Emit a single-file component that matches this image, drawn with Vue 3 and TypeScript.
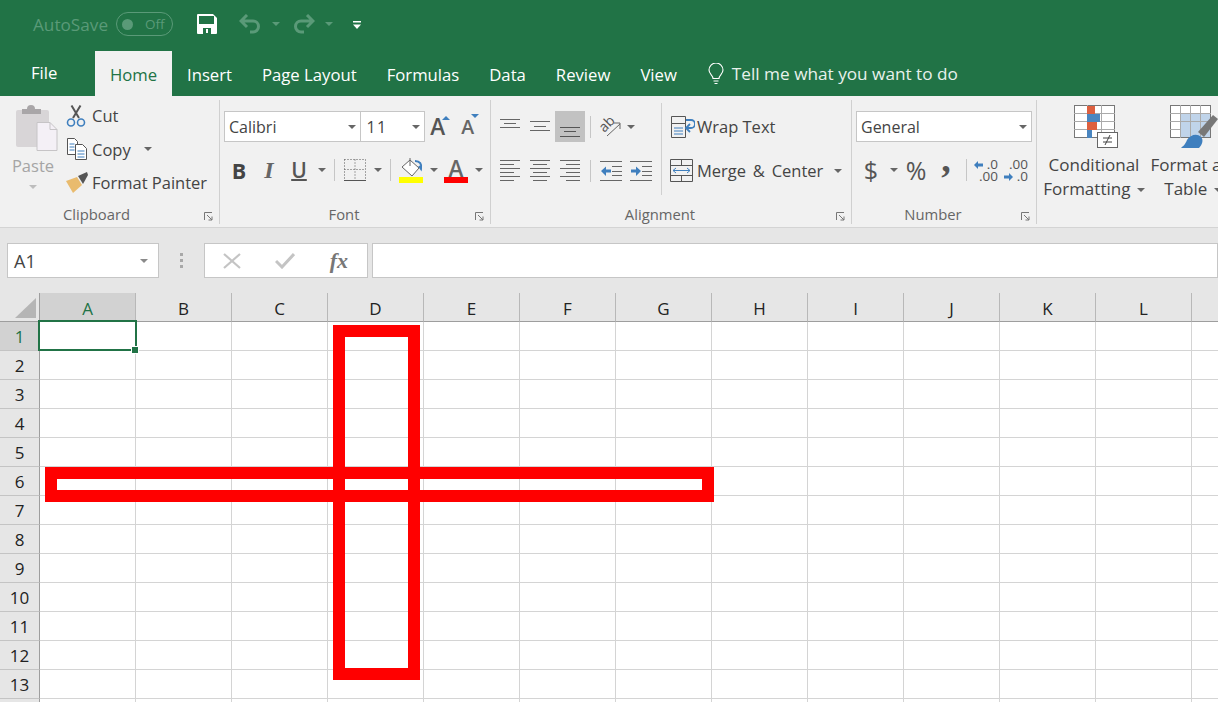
<template>
  <div class="excel">
    <!-- title bar -->
    <div class="titlebar">
      <span class="autosave">AutoSave</span>
      <span class="toggle"><i class="knob"></i><span class="off">Off</span></span>
      <svg class="save" width="20" height="20" viewBox="0 0 20 20">
        <path d="M0 1a1 1 0 0 1 1-1h15l4 4v15a1 1 0 0 1-1 1H1a1 1 0 0 1-1-1z" fill="#fff" />
        <rect x="2" y="2" width="15" height="8" fill="#217346" />
        <rect x="6" y="14" width="8" height="6" fill="#217346" />
        <rect x="9" y="15" width="2" height="4" fill="#fff" />
      </svg>
      <svg class="undo" width="23" height="20" viewBox="0 0 23 20" fill="none" stroke="#5a9a78" stroke-width="3">
        <path d="M8 1 2 7l6 6M2 7h12a5.500 5.500 0 0 1 0 11h-3" />
      </svg>
      <i class="caret dim undo-caret"></i>
      <svg class="redo" width="23" height="20" viewBox="0 0 23 20" fill="none" stroke="#5a9a78" stroke-width="3">
        <path d="m15 1 6 6-6 6m6-6H9a5.500 5.500 0 0 0 0 11h3" />
      </svg>
      <i class="caret dim undo-caret"></i>
      <svg class="customize" width="8" height="8" viewBox="0 0 8 8" fill="#fff">
        <rect width="8" height="1.500" />
        <path d="M0 3.500h8L4 8z" />
      </svg>
    </div>

    <!-- tabs -->
    <div class="tabs">
      <span v-for="t in tabs" :key="t" class="tab" :class="{ active: t === 'Home', file: t === 'File' }">{{ t }}</span>
      <svg class="bulb" width="16" height="22" viewBox="0 0 16 22" fill="none" stroke="#fff" stroke-width="1.100">
        <path d="M5 15.500c0-3-4-4.500-4-8.500a7 7 0 0 1 14 0c0 4-4 5.500-4 8.500zM5.500 18h5M6.500 20.500h3" />
      </svg>
      <span class="tell">Tell me what you want to do</span>
    </div>

    <!-- ribbon -->
    <div class="ribbon">
      <section class="group g-clip">
        <div class="g-body clip-body">
          <div class="paste">
            <svg width="42" height="46" viewBox="0 0 42 46">
              <rect y="5" width="33" height="37" rx="2" fill="#d8d5d7" />
              <path d="M6 9V4h5a4 4 0 0 1 8 0h6v5z" fill="#a9a6a8" />
              <path d="M21 17.500h13l7 7v21H21z" fill="#f4f0f6" stroke="#c6c4c6" />
              <path d="M34 17.500v7h7" fill="none" stroke="#c6c4c6" />
            </svg>
            <span class="paste-label">Paste</span>
            <i class="caret pale"></i>
          </div>
          <div class="clip-rows">
            <div class="clip-row">
              <svg class="ic-cut" width="20" height="22" viewBox="0 0 20 22" fill="none">
                <path d="M7 13 14.500 0.500M13 13 5.500 0.500" stroke="#555" stroke-width="2" />
                <circle cx="5" cy="17.500" r="3.500" stroke="#3f7fbe" stroke-width="1.600" />
                <circle cx="15" cy="17.500" r="3.500" stroke="#3f7fbe" stroke-width="1.600" />
              </svg>
              <span>Cut</span>
            </div>
            <div class="clip-row">
              <svg class="ic-copy" width="20" height="22" viewBox="0 0 20 22" fill="#fff">
                <path d="M.5.500h7l3 3v13H.500z" stroke="#555" />
                <path d="M2.500 6h5M2.500 9h5M2.500 12h5" stroke="#3f7fbe" />
                <path d="M8.500 6.500h7l4 4v11h-11z" stroke="#555" />
                <path d="M10.500 13h7M10.500 16h7M10.500 19h7" stroke="#3f7fbe" />
              </svg>
              <span>Copy</span>
              <i class="caret copy-caret"></i>
            </div>
            <div class="clip-row">
              <svg class="ic-painter" width="23" height="21" viewBox="0 0 23 21">
                <path d="M1 9 12 5l5 8-9 8z" fill="#e9bb6e" />
                <path d="M13 4 22 0l1 3-5 9z" fill="#555" />
              </svg>
              <span>Format Painter</span>
            </div>
          </div>
        </div>
        <div class="g-label"><span></span><span>Clipboard</span><svg class="launch" width="9" height="9" viewBox="0 0 9 9" fill="none" stroke="#777"><path d="M.5 8V.5H8M3 3l5 5M8 4.500V8H4.500" /></svg></div>
      </section>

      <section class="group g-font">
        <div class="g-body font-body">
          <div class="row combos">
            <div class="combo font-name"><span>Calibri</span><i class="caret"></i></div>
            <div class="combo font-size"><span class="size-val">11</span><i class="caret"></i></div>
            <span class="grow"><span class="big-a">A</span><i class="tri up"></i></span>
            <span class="grow shrink"><span class="small-a">A</span><i class="tri down"></i></span>
          </div>
          <div class="row tool-row">
            <span class="tb bold">B</span>
            <span class="tb ital">I</span>
            <span class="tb under">U</span>
            <span class="ar"><i class="caret"></i></span>
            <i class="vsep"></i>
            <span class="tb">
              <svg width="22" height="22" viewBox="0 0 22 22" fill="none" stroke="#555">
                <path d="M.5.500h21M.5 10.500h21M.5.500v20M11 .5v20M21.500.500v20" stroke-dasharray="1 2" />
                <path d="M0 21.500h22" />
              </svg>
            </span>
            <span class="ar"><i class="caret"></i></span>
            <i class="vsep"></i>
            <span class="tb stack">
              <svg width="24" height="19" viewBox="0 0 24 19" fill="none">
                <path d="M3 9l8-7 9 8-7 8z" fill="#fff" stroke="#666" />
                <path d="M11 0v8" stroke="#666" />
                <path d="M16 3c5 0 7 3 6 8l-2-3" stroke="#3f7fbe" stroke-width="2" />
              </svg>
              <i class="bar yellow"></i>
            </span>
            <span class="ar"><i class="caret"></i></span>
            <span class="tb stack">
              <span class="color-a">A</span>
              <i class="bar red"></i>
            </span>
            <span class="ar"><i class="caret"></i></span>
          </div>
        </div>
        <div class="g-label"><span></span><span>Font</span><svg class="launch" width="9" height="9" viewBox="0 0 9 9" fill="none" stroke="#777"><path d="M.5 8V.5H8M3 3l5 5M8 4.500V8H4.500" /></svg></div>
      </section>

      <section class="group g-align">
        <div class="g-body align-body">
          <div class="align-left">
            <div class="row align-row">
              <span class="tb"><svg width="20" height="22" viewBox="0 0 20 22" stroke="#666"><path d="M0 3.500h20M4 7.500h12M0 11.500h20" /></svg></span>
              <span class="tb"><svg width="20" height="22" viewBox="0 0 20 22" stroke="#666"><path d="M0 5.500h20M4 10.500h12M0 14.500h20" /></svg></span>
              <span class="tb on"><svg width="20" height="22" viewBox="0 0 20 22" stroke="#555"><path d="M0 11.500h20M4 15.500h12M0 20.500h20" /></svg></span>
              <i class="vsep"></i>
              <span class="tb">
                <svg class="orient" width="22" height="20" viewBox="0 0 22 20" fill="none">
                  <text x="0" y="12" transform="rotate(-45 7 9)" class="ab">ab</text>
                  <path d="M7 19 20 7M14 6h6v6" stroke="#666" />
                </svg>
              </span>
              <span class="ar orient-caret"><i class="caret"></i></span>
            </div>
            <div class="row align-row second">
              <span class="tb" v-for="(d, i) in alignPaths" :key="i">
                <svg width="20" height="22" viewBox="0 0 20 22" stroke="#666"><path :d="d" /></svg>
              </span>
              <i class="vsep"></i>
              <span class="tb">
                <svg width="22" height="22" viewBox="0 0 22 22" fill="none">
                  <path d="M0 1.500h22M12 6.500h10M12 11.500h10M12 15.500h10M0 20.500h22" stroke="#666" />
                  <path d="M1 11 6 6.500v3h5v3H6V16z" fill="#3f7fbe" />
                </svg>
              </span>
              <span class="tb">
                <svg width="22" height="22" viewBox="0 0 22 22" fill="none">
                  <path d="M0 1.500h22M12 6.500h10M12 11.500h10M12 15.500h10M0 20.500h22" stroke="#666" />
                  <path d="M11 11 6 6.500v3H1v3h5V16z" fill="#3f7fbe" />
                </svg>
              </span>
            </div>
          </div>
          <i class="tall-sep"></i>
          <div class="align-right">
            <div class="wide-btn wrap">
              <svg width="24" height="22" viewBox="0 0 24 22" fill="none">
                <path d="M.5.500h14v7H.5zM.5 7.500h14v14H.5z" stroke="#555" />
                <path d="M3 12h9M3 15h9M3 18h9" stroke="#3f7fbe" />
                <path d="M15 4h5a3.500 3.500 0 0 1 0 8h-4M19 8l-4 4 4 4" stroke="#3f7fbe" stroke-width="1.800" />
              </svg>
              <span>Wrap Text</span>
            </div>
            <div class="wide-btn merge">
              <svg width="23" height="23" viewBox="0 0 23 23" fill="none">
                <path d="M.5.500h22v22H.5zM.5 6.500h22M.5 16.500h22M11.500.500v6M11.500 16.500v6" stroke="#555" />
                <path d="M3 11.500h17M6 9l-3 2.500L6 14M17 9l3 2.500L17 14" stroke="#3f7fbe" />
              </svg>
              <span class="merge-text">Merge &amp; Center</span>
              <i class="caret merge-caret"></i>
            </div>
          </div>
        </div>
        <div class="g-label"><span></span><span>Alignment</span><svg class="launch" width="9" height="9" viewBox="0 0 9 9" fill="none" stroke="#777"><path d="M.5 8V.5H8M3 3l5 5M8 4.500V8H4.500" /></svg></div>
      </section>

      <section class="group g-number">
        <div class="g-body font-body">
          <div class="row combos">
            <div class="combo number-format"><span>General</span><i class="caret"></i></div>
          </div>
          <div class="row tool-row">
            <span class="tb sym dollar">$</span>
            <span class="ar"><i class="caret"></i></span>
            <span class="tb sym">%</span>
            <span class="tb sym comma">,</span>
            <i class="vsep"></i>
            <span class="tb dec">
              <span><svg width="9" height="8" viewBox="0 0 9 8"><path d="M0 4l4-4v2.500h5v3H4V8z" fill="#3f7fbe" /></svg> .0</span>
              <span>.00</span>
            </span>
            <span class="tb dec">
              <span>.00</span>
              <span><svg width="9" height="8" viewBox="0 0 9 8"><path d="M9 4 5 0v2.500H0v3h5V8z" fill="#3f7fbe" /></svg> .0</span>
            </span>
          </div>
        </div>
        <div class="g-label"><span></span><span>Number</span><svg class="launch" width="9" height="9" viewBox="0 0 9 9" fill="none" stroke="#777"><path d="M.5 8V.5H8M3 3l5 5M8 4.500V8H4.500" /></svg></div>
      </section>

      <section class="g-styles">
        <div class="big-btn cond">
          <svg class="cond-icon" width="45" height="44" viewBox="0 0 45 44" fill="none">
            <rect x=".5" y=".5" width="40" height="32" fill="#fff" stroke="#777" />
            <path d="M13.500 0v33M27.500 0v33M0 8.500h41M0 16.500h41M0 24.500h41" stroke="#aaa" />
            <rect x="13" y="1" width="8" height="8" fill="#dd6040" />
            <rect x="13" y="9" width="13" height="8" fill="#4a86c0" />
            <rect x="13" y="17" width="10" height="8" fill="#dd6040" />
            <rect x="13" y="25" width="5" height="8" fill="#4a86c0" />
            <rect x="23.500" y="27.500" width="20" height="15" fill="#fff" stroke="#666" />
            <path d="M29 33h9M29 37h9M31 40l5-10" stroke="#444" />
          </svg>
          <span class="big-text">Conditional</span>
          <span class="big-text">Formatting <i class="caret inline"></i></span>
        </div>
        <div class="big-btn table">
          <svg class="table-icon" width="48" height="44" viewBox="0 0 48 44" fill="none">
            <rect x=".5" y=".5" width="40" height="32" fill="#fff" stroke="#777" />
            <rect x="10" y="9" width="30" height="23" fill="#c0d4ea" />
            <path d="M10.500 0v33M20.500 0v33M30.500 0v33M0 8.500h41M0 16.500h41M0 24.500h11" stroke="#aaa" />
            <path d="M28 27 43 10l5 4-14 18z" fill="#777" />
            <path d="M11 43c2-2 4-3 6-8 3-5 10-7 14-3 3 3 1 8-2 11z" fill="#3f7fbe" />
          </svg>
          <span class="big-text">Format as</span>
          <span class="big-text table-line">Table <i class="caret inline"></i></span>
        </div>
      </section>
    </div>

    <!-- formula bar -->
    <div class="formula">
      <div class="namebox"><span>A1</span><i class="caret pale-dark"></i></div>
      <div class="dots"><i></i><i></i><i></i></div>
      <div class="fx-box">
        <svg width="18" height="16" viewBox="0 0 18 16" fill="none" stroke="#c4c4c4" stroke-width="2.200"><path d="M1 1l16 14M17 1 1 15" /></svg>
        <svg width="20" height="16" viewBox="0 0 20 16" fill="none" stroke="#c4c4c4" stroke-width="3"><path d="M1 8l6 6L19 1" /></svg>
        <span class="fx">fx</span>
      </div>
      <div class="fx-input"></div>
    </div>

    <!-- sheet -->
    <div class="sheet">
      <div class="grid">
        <div class="corner"><i></i></div>
        <div v-for="c in columns" :key="c" class="col-head" :class="{ sel: c === 'A' }">{{ c }}</div>
        <div class="col-head end"></div>
        <template v-for="r in rows" :key="r">
          <div class="row-head" :class="{ sel: r === 1 }">{{ r }}</div>
          <div v-for="c in columns" :key="c" class="cell">
            <div v-if="r === 1 && c === 'A'" class="selection"><i class="handle"></i></div>
          </div>
          <div class="cell end"></div>
        </template>
        <div class="row-head"></div>
        <div v-for="c in columns" :key="c" class="cell"></div>
        <div class="cell end"></div>
      </div>
      <div class="shape vertical"></div>
      <div class="shape horizontal"></div>
    </div>
  </div>
</template>

<script setup lang="ts">
const tabs: string[] = ['File', 'Home', 'Insert', 'Page Layout', 'Formulas', 'Data', 'Review', 'View'];
const columns: string[] = 'ABCDEFGHIJKL'.split('');
const rows: number[] = Array.from({ length: 13 }, (_, i) => i + 1);

const ys = [0.5, 4.5, 8.5, 12.5, 16.5, 20.5];
const linesFor = (x: number) =>
  ys.map((y, i) => (i % 2 === 0 ? `M0 ${y}h20` : `M${x} ${y}h14`)).join('');

const alignPaths: string[] = [linesFor(0), linesFor(3), linesFor(6)];
</script>

<style scoped>
.excel {
  width: 1218px;
  height: 702px;
  overflow: hidden;
  font-family: "Open Sans", "Noto Sans", sans-serif;
  color: #444;
  background: #fff;
}
i {
  display: block;
  font-style: normal;
}

.titlebar {
  height: 51px;
  padding: 0 0 3px 33px;
  box-sizing: border-box;
  display: flex;
  align-items: center;
  background: #217346;
}
.autosave {
  width: 83px;
  font-size: 17.2px;
  color: #5a9a78;
  white-space: nowrap;
}
.toggle {
  width: 57px;
  height: 24px;
  box-sizing: border-box;
  border: 1px solid #5a9a78;
  border-radius: 12px;
  display: flex;
  align-items: center;
  color: #5a9a78;
  font-size: 13.5px;
}
.knob {
  width: 11px;
  height: 11px;
  margin-left: 5px;
  border-radius: 50%;
  background: #5a9a78;
}
.off {
  margin-left: 12px;
}
.save {
  margin-left: 24px;
}
.undo {
  margin-left: 22px;
}
.undo-caret {
  margin: 0 12px 0 10px;
}
.customize {
  margin: 1px 0 0 8px;
}

.caret {
  width: 0;
  height: 0;
  border-left: 4px solid transparent;
  border-right: 4px solid transparent;
  border-top: 4px solid #666;
}
.caret.dim {
  border-top-color: #5a9a78;
}
.caret.pale {
  border-top-color: #bdbdbd;
}
.caret.pale-dark {
  border-top-color: #8a8a8a;
}
.caret.inline {
  display: inline-block;
  vertical-align: middle;
  margin-left: 2px;
}

.tabs {
  height: 45px;
  display: flex;
  align-items: center;
  background: #217346;
  color: #fff;
  font-size: 16.7px;
}
.tab {
  height: 45px;
  padding: 0 15px;
  line-height: 47px;
  white-space: nowrap;
}
.tab.file {
  width: 95px;
  padding: 0 0 0 31px;
  box-sizing: border-box;
  line-height: 44px;
}
.tab.active {
  width: 77px;
  padding: 0;
  text-align: center;
  background: #f1f1f1;
  color: #217346;
}
.bulb {
  margin: 0 8px 0 16px;
}
.tell {
  font-size: 17.2px;
  color: #e8f1ec;
  white-space: nowrap;
}

.ribbon {
  height: 132px;
  box-sizing: border-box;
  padding: 4px 0 3px;
  display: flex;
  background: #f1f1f1;
  border-bottom: 1px solid #d4d4d4;
  font-size: 16.5px;
}
.group {
  height: 124px;
  flex: none;
  box-sizing: border-box;
  display: flex;
  flex-direction: column;
  border-right: 1px solid #d0d0d0;
}
.g-clip {
  width: 220px;
}
.g-font {
  width: 271px;
  padding-left: 4px;
}
.g-align {
  width: 361px;
  padding-left: 4px;
}
.g-number {
  width: 185px;
  padding-left: 4px;
}
.g-body {
  flex: 1;
  min-height: 0;
}
.g-label {
  height: 24px;
  padding: 4px 6px 0 0;
  box-sizing: border-box;
  flex: none;
  display: grid;
  grid-template-columns: 1fr auto 1fr 20px;
  align-items: center;
  font-size: 14.8px;
  color: #666;
}
.launch {
  grid-column: 4;
  justify-self: end;
  margin-top: 4px;
}

.clip-body {
  display: flex;
}
.paste {
  width: 66px;
  display: flex;
  flex-direction: column;
  align-items: center;
}
.paste svg {
  margin: 5px 0 0 7px;
}
.paste-label {
  margin-top: 3px;
  color: #a5a5a5;
}
.paste .caret {
  margin-top: 8px;
}
.clip-rows {
  display: flex;
  flex-direction: column;
  margin-top: -1px;
}
.clip-row {
  height: 33.5px;
  display: flex;
  align-items: center;
  white-space: nowrap;
}
.clip-row svg {
  flex: none;
}
.ic-cut {
  margin-right: 6px;
}
.ic-copy {
  margin: 0 5px 0 1px;
}
.ic-painter {
  margin: 0 4px 0 -1px;
}
.copy-caret {
  margin-left: 13px;
}

.row {
  display: flex;
  align-items: center;
}
.combos {
  margin-top: 11px;
  height: 31px;
}
.combo {
  height: 31px;
  box-sizing: border-box;
  padding: 0 4px;
  display: flex;
  align-items: center;
  justify-content: space-between;
  background: #fff;
  border: 1px solid #c6c6c6;
  font-size: 16px;
}
.font-name {
  width: 138px;
}
.font-size {
  width: 65px;
  margin-left: -1px;
}
.size-val {
  letter-spacing: 1.5px;
  padding-left: 1px;
}
.number-format {
  width: 176px;
}
.grow {
  width: 30px;
  display: flex;
  align-items: flex-start;
  margin-left: 5px;
}
.grow.shrink {
  margin-left: 0;
}
.big-a {
  font-size: 22.500px;
  line-height: 34px;
  font-weight: 600;
  color: #555;
}
.small-a {
  font-size: 19.500px;
  line-height: 35px;
  font-weight: 600;
  color: #666;
  margin-left: 1px;
}
.tri {
  width: 0;
  height: 0;
  margin: 6px 0 0 -3px;
  border-left: 4px solid transparent;
  border-right: 4px solid transparent;
}
.tri.up {
  border-bottom: 4px solid #3f7fbe;
}
.tri.down {
  margin-top: 5px;
  border-top: 4px solid #3f7fbe;
}

.tool-row {
  margin-top: 12px;
  height: 32px;
}
.tb {
  width: 30px;
  height: 31px;
  flex: none;
  display: flex;
  align-items: center;
  justify-content: center;
}
.tb.on {
  background: #c2c2c2;
}
.ar {
  width: 15px;
  flex: none;
  display: flex;
  justify-content: center;
}
.vsep {
  width: 1px;
  height: 22px;
  margin: 0 5px;
  flex: none;
  background: #c6c6c6;
}
.bold {
  font-weight: 700;
  font-size: 21.500px;
  color: #444;
}
.ital {
  font-family: "Liberation Serif", serif;
  font-style: italic;
  font-weight: 700;
  font-size: 24px;
  color: #666;
}
.under {
  font-size: 21px;
  font-weight: 600;
  text-decoration: underline;
  text-decoration-thickness: 2px;
  text-underline-offset: 1px;
  color: #555;
}
.stack {
  flex-direction: column;
  justify-content: flex-start;
  padding-top: 3px;
  box-sizing: border-box;
}
.bar {
  width: 24px;
  height: 6px;
  flex: none;
}
.bar.yellow {
  background: #ffff00;
}
.bar.red {
  background: #ff0000;
}
.color-a {
  height: 19px;
  line-height: 21px;
  font-size: 22.500px;
  font-weight: 600;
  color: #666;
}

.align-body {
  display: flex;
}
.align-left {
  width: 166px;
}
.align-row {
  margin-top: 11px;
  height: 31px;
}
.align-row.second {
  margin-top: 13px;
}
.ab {
  font-size: 14px;
  fill: #555;
}
.orient {
  overflow: visible;
}
.orient-caret {
  margin-left: -3px;
}
.tall-sep {
  width: 1px;
  height: 92px;
  margin-top: 3px;
  background: #d0d0d0;
}
.align-right {
  padding-left: 9px;
}
.wide-btn {
  display: flex;
  align-items: center;
  white-space: nowrap;
}
.wrap {
  height: 31px;
  margin-top: 11px;
}
.merge {
  height: 31px;
  margin-top: 13px;
}
.wide-btn svg {
  flex: none;
}
.wrap svg {
  margin-right: 2px;
}
.merge svg {
  margin-right: 4px;
  margin-left: -1px;
}
.merge-text {
  word-spacing: 2.5px;
}
.merge-caret {
  margin-left: 11px;
}

.sym {
  font-size: 25px;
  color: #555;
}
.comma {
  font-family: "Liberation Serif", serif;
  font-weight: 700;
  font-size: 38px;
  line-height: 1;
  padding-bottom: 22px;
  box-sizing: border-box;
}
.dec {
  flex-direction: column;
  align-items: flex-end;
  padding-right: 4px;
  box-sizing: border-box;
  font-size: 13.500px;
  line-height: 12px;
  color: #555;
  white-space: nowrap;
}

.g-styles {
  display: flex;
  padding-left: 4px;
  flex: none;
}
.big-btn {
  flex: none;
  display: flex;
  flex-direction: column;
  align-items: center;
}
.big-btn svg {
  margin-top: 5px;
  margin-bottom: 4px;
}
.big-btn svg.cond-icon {
  margin-left: 5px;
}
.big-btn svg.table-icon {
  margin-left: 8px;
}
.cond {
  width: 106px;
}
.table {
  width: 86px;
}
.big-text {
  height: 24px;
  line-height: 24px;
  white-space: nowrap;
  font-size: 17px;
}
.table-line {
  padding-left: 6px;
}

.formula {
  height: 65px;
  box-sizing: border-box;
  padding: 15px 0 0 7px;
  display: flex;
  align-items: flex-start;
  background: #e6e6e6;
}
.namebox {
  width: 152px;
  height: 35px;
  box-sizing: border-box;
  padding: 0 10px 0 6px;
  display: flex;
  align-items: center;
  justify-content: space-between;
  background: #fff;
  border: 1px solid #c6c6c6;
  font-size: 18px;
}
.dots {
  width: 45px;
  height: 35px;
  display: flex;
  flex-direction: column;
  align-items: center;
  justify-content: center;
  gap: 3px;
}
.dots i {
  width: 3px;
  height: 3px;
  background: #a8a8a8;
}
.fx-box {
  width: 164px;
  height: 35px;
  box-sizing: border-box;
  padding: 0 19px 0 18px;
  display: flex;
  align-items: center;
  justify-content: space-between;
  background: #fff;
  border: 1px solid #c6c6c6;
}
.fx {
  font-family: "Liberation Serif", serif;
  font-style: italic;
  font-weight: 700;
  font-size: 22px;
  color: #777;
}
.fx-input {
  flex: 1;
  height: 35px;
  margin-left: 4px;
  box-sizing: border-box;
  background: #fff;
  border: 1px solid #c6c6c6;
}

.sheet {
  position: relative;
  height: 409px;
  overflow: hidden;
}
.grid {
  display: grid;
  grid-template-columns: 40px repeat(12, 96px) 1fr;
  grid-template-rows: 29px repeat(14, 29px);
  background: #fff;
}
.corner {
  box-sizing: border-box;
  padding: 5px 3px 3px 0;
  background: #e6e6e6;
  border-right: 1px solid #9e9e9e;
  border-bottom: 1px solid #9e9e9e;
  display: flex;
  justify-content: flex-end;
}
.corner i {
  width: 0;
  height: 0;
  border-left: 21px solid transparent;
  border-bottom: 20px solid #b5b5b5;
}
.col-head {
  box-sizing: border-box;
  background: #e6e6e6;
  border-right: 1px solid #b8b8b8;
  border-bottom: 1px solid #9e9e9e;
  text-align: center;
  line-height: 32px;
  font-size: 17px;
  color: #222;
}
.col-head.end {
  border-right: 0;
}
.col-head.sel {
  background: #d2d2d2;
  color: #217346;
}
.row-head {
  box-sizing: border-box;
  background: #e6e6e6;
  border-right: 1px solid #9e9e9e;
  border-bottom: 1px solid #c4c4c4;
  text-align: center;
  line-height: 30px;
  font-size: 17px;
  color: #222;
}
.row-head.sel {
  background: #d2d2d2;
  color: #217346;
}
.cell {
  position: relative;
  box-sizing: border-box;
  border-right: 1px solid #d4d4d4;
  border-bottom: 1px solid #d4d4d4;
}
.cell.end {
  border-right: 0;
}
.selection {
  position: absolute;
  left: -2px;
  top: -2px;
  width: 99px;
  height: 31px;
  box-sizing: border-box;
  border: 2px solid #217346;
  z-index: 2;
}
.handle {
  position: absolute;
  right: -3px;
  bottom: -4px;
  width: 6px;
  height: 6px;
  background: #217346;
  outline: 1px solid #fff;
}
.shape {
  position: absolute;
  box-sizing: border-box;
  border: 12px solid #ff0000;
  z-index: 3;
}
.shape.vertical {
  left: 333px;
  top: 32px;
  width: 87px;
  height: 355px;
}
.shape.horizontal {
  left: 45px;
  top: 174px;
  width: 669px;
  height: 35px;
}
</style>
